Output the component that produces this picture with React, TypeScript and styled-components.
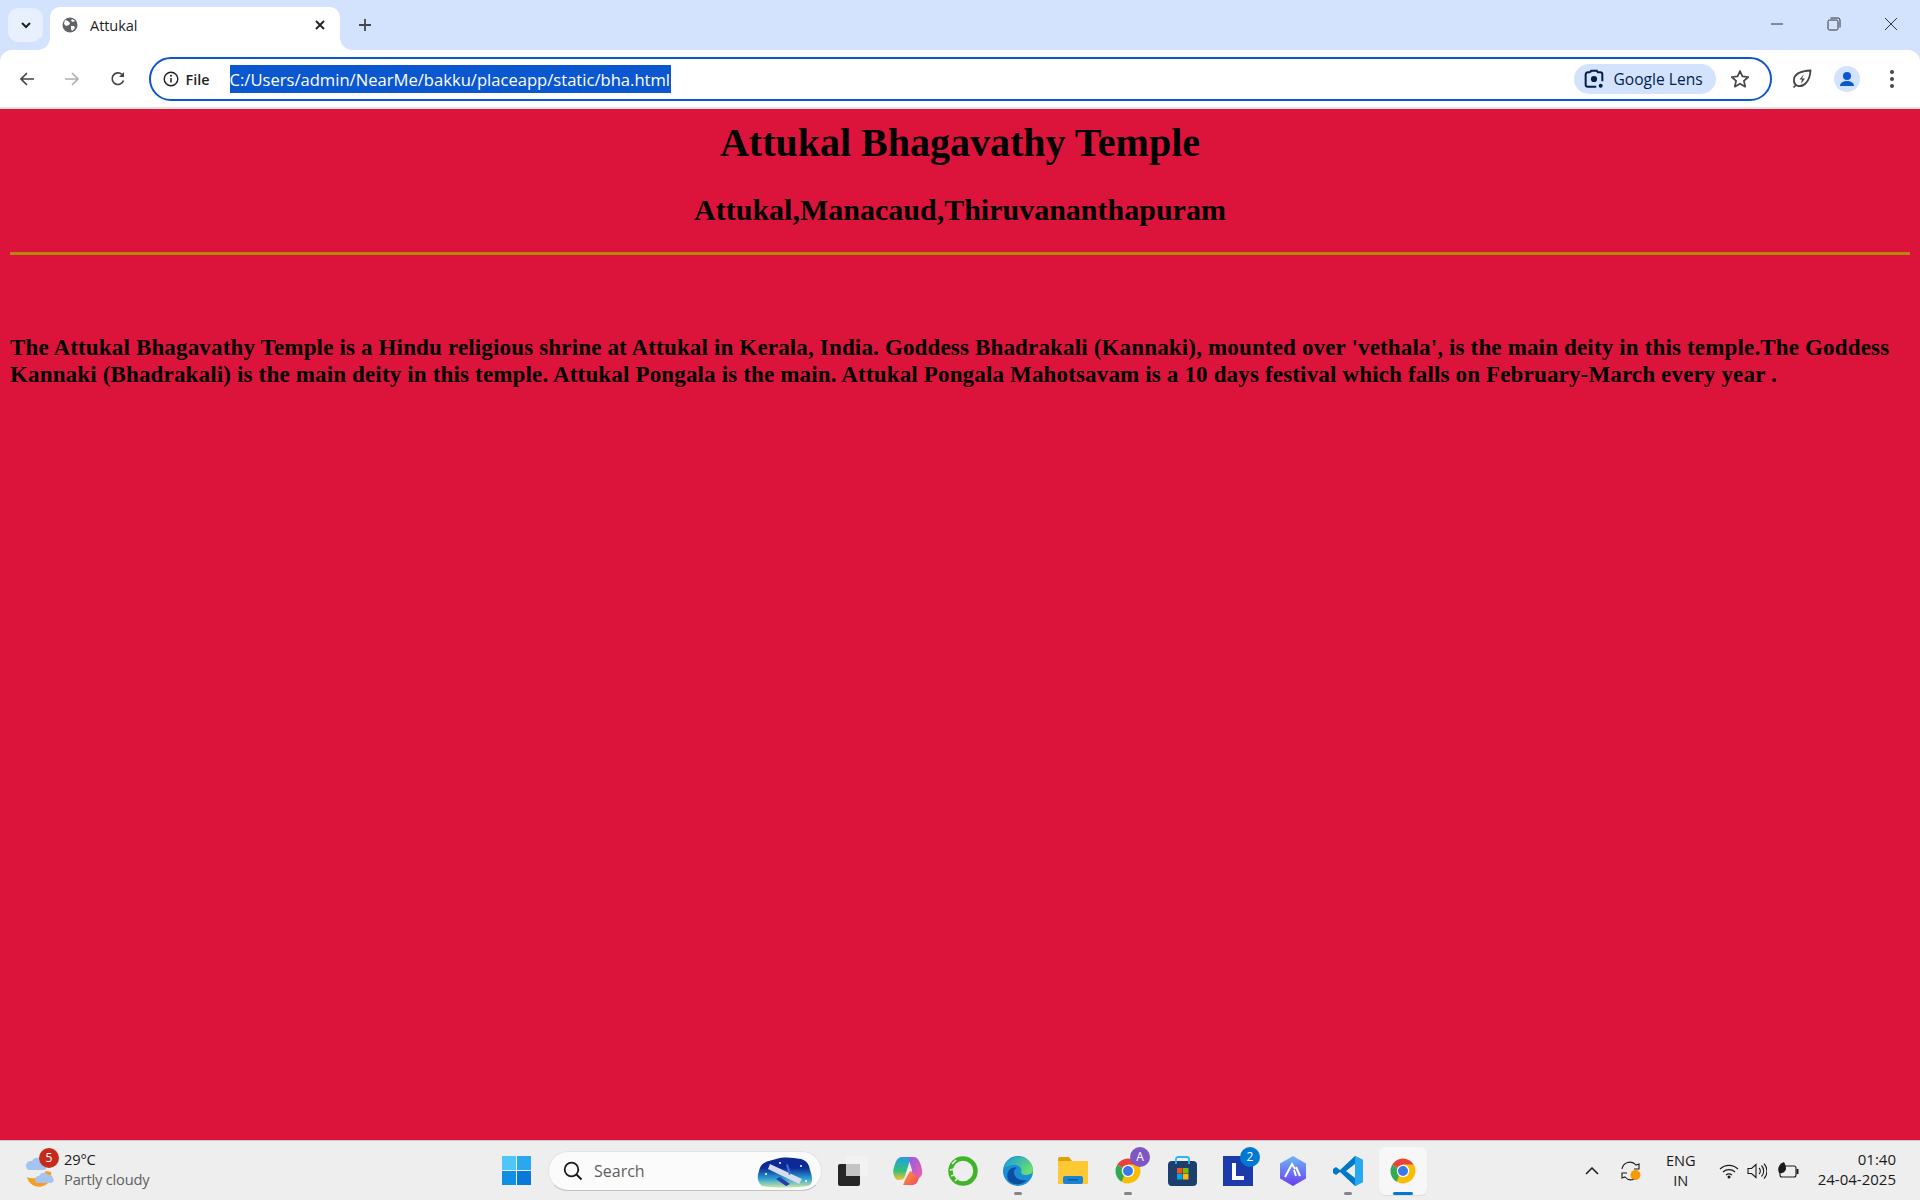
import React from "react";
import styled, { createGlobalStyle } from "styled-components";

const Global = createGlobalStyle`
  html, body { margin: 0; padding: 0; height: 100%; }
  body { overflow: hidden; font-family: "Open Sans", "Liberation Sans", sans-serif; }
  #root { height: 100%; }
  * { box-sizing: border-box; }
`;

const Screen = styled.div`
  width: 1920px; height: 1200px; display: flex; flex-direction: column; background: #d3e3fd;
`;
const TabStrip = styled.div`
  height: 50px; flex: none; display: flex; align-items: flex-end; padding-left: 8px;
`;
const TabSearch = styled.div`
  width: 35px; height: 34px; margin-bottom: 8px; flex: none; border-radius: 10px; background: #e8effd;
  display: flex; align-items: center; justify-content: center;
`;
const Tab = styled.div`
  position: relative; width: 290px; height: 43px; margin-left: 7px; flex: none; background: #fff;
  border-radius: 10px 10px 0 0; display: flex; align-items: center; padding: 0 14px 8px 12px;
  &::before, &::after { content: ""; position: absolute; bottom: 0; width: 12px; height: 12px; background: radial-gradient(circle at var(--c) 0, #d3e3fd 11.5px, #fff 12px); }
  &::before { left: -12px; --c: 0; }
  &::after { right: -12px; --c: 100%; }
`;
const TabTitle = styled.span`
  flex: 1; margin-left: 12px; font-size: 14.6px; color: #1f1f1f; letter-spacing: -0.1px;
`;
const NewTab = styled.div`
  width: 28px; height: 28px; margin: 0 0 11px 11px; flex: none; display: flex; align-items: center; justify-content: center;
`;
const WindowControls = styled.div`
  margin-left: auto; display: flex; align-self: flex-start; padding-top: 10px; padding-right: 1px;
`;
const WindowButton = styled.div`
  width: 57px; height: 28px; display: flex; align-items: center; justify-content: center;
`;
const Toolbar = styled.div`
  height: 59px; flex: none; background: #fff; border-bottom: 2px solid #e3e3e3; border-radius: 12px 12px 0 0;
  display: flex; align-items: flex-start; padding: 7px 0 0 0; position: relative;
`;
const NavButton = styled.div<{ $w: number }>`
  width: ${(p) => p.$w}px; height: 44px; flex: none; display: flex; align-items: center; justify-content: center;
`;
const Omnibox = styled.div`
  width: 1623px; height: 44px; flex: none; margin-left: 3px; border: 2.5px solid #0b57d0; border-radius: 22px;
  display: flex; align-items: center; padding: 0 11.5px;
`;
const SiteInfo = styled.span`
  font-size: 14.4px; font-weight: 600; color: #1f1f1f; margin-left: 7px; width: 44px; flex: none;
`;
const Selected = styled.span`
  background: #0b57d0; color: #fff; height: 28px; line-height: 29px; font-size: 16.6px; white-space: nowrap;
  width: 441px; flex: none; font-family: "Open Sans", sans-serif;
`;
const LensChip = styled.div`
  margin-left: auto; width: 142px; height: 30px; border-radius: 15px; background: #d3e3fd; display: flex; align-items: center;
  padding-left: 10px; gap: 10px; color: #041e49; font-size: 15.6px; font-weight: 500; white-space: nowrap;
`;
const StarWrap = styled.div`
  width: 36px; margin-left: 6px; margin-right: 1px; display: flex; justify-content: center;
`;
const Page = styled.main`
  flex: 1; min-height: 0; background: #dc143c; padding: 0 10px; color: #000; font-family: "Liberation Serif", "Times New Roman", serif;
`;
const Title = styled.h1`
  font-size: 40px; font-weight: 700; text-align: center; margin: 0; padding-top: 11px; line-height: 46px;
`;
const Subtitle = styled.h2`
  font-size: 30px; font-weight: 700; text-align: center; margin: 27px 0 0; line-height: 34px;
`;
const Rule = styled.hr`
  height: 3px; border: 0; margin: 25px 0 0; background: #b8860b;
`;
const Paragraph = styled.h3`
  font-size: 23px; font-weight: 700; margin: 79px 0 0; line-height: 27px; letter-spacing: 0.16px;
`;
const Taskbar = styled.footer`
  height: 60px; flex: none; background: #eeeeee; border-top: 1px solid #c9c9c9; display: grid;
  grid-template-columns: 489px 1fr 400px; align-items: center; position: relative;
`;
const Weather = styled.div`
  display: flex; align-items: center; padding-left: 24px; gap: 5px;
`;
const WeatherIcon = styled.div`
  position: relative; width: 35px; height: 38px; flex: none;
`;
const WeatherBadge = styled.span`
  position: absolute; left: 15px; top: -4px; width: 20px; height: 20px; border-radius: 50%; background: #c42b1c; color: #fff;
  font-size: 12px; display: flex; align-items: center; justify-content: center;
`;
const WeatherText = styled.div`
  display: flex; flex-direction: column; font-size: 14.7px; line-height: 20px; color: #1a1a1a; letter-spacing: -0.2px; margin-top: -4px;
  & > span:last-child { color: #616161; }
`;
const Center = styled.div`
  display: flex; align-items: center; height: 100%;
`;
const TaskItem = styled.div<{ $active?: boolean }>`
  position: relative; width: ${(p) => (p.$active ? 48 : 55)}px; height: 48px; flex: none; display: flex; align-items: center; justify-content: center;
  margin: ${(p) => (p.$active ? "0 3.5px" : "0")};
  border-radius: 6px; background: ${(p) => (p.$active ? "#f7f7f7" : "transparent")};
  box-shadow: ${(p) => (p.$active ? "0 1px 1px rgba(0,0,0,.08)" : "none")};
`;
const RunDot = styled.span<{ $active?: boolean }>`
  position: absolute; bottom: 0; left: 50%; transform: translateX(-50%); height: 3px; border-radius: 2px;
  width: ${(p) => (p.$active ? 20 : 8)}px; background: ${(p) => (p.$active ? "#0078d4" : "#858585")};
`;
const IconBadge = styled.span<{ $bg: string; $right: number }>`
  position: absolute; top: 0; right: ${(p) => p.$right}px; width: 20px; height: 20px; border-radius: 50%; background: ${(p) => p.$bg};
  color: #fff; font-size: 12px; display: flex; align-items: center; justify-content: center;
`;
const SearchBox = styled.div`
  width: 274px; height: 40px; margin: 0 3px 0 4px; border-radius: 20px; background: #fbfbfb; border: 1px solid #e3e3e3; border-bottom-color: #c4c4c4;
  display: flex; align-items: center; padding-left: 14px; gap: 11px; position: relative; font-size: 16px; color: #5f5f5f; flex: none;
`;
const SearchArt = styled.div`
  position: absolute; right: 7px; top: 4px;
`;
const Tray = styled.div`
  display: flex; align-items: center; justify-content: flex-end; height: 100%; padding-right: 24px; color: #1a1a1a;
`;
const TrayIcon = styled.div<{ $w: number; $ml?: number }>`
  width: ${(p) => p.$w}px; margin-left: ${(p) => p.$ml ?? 0}px; display: flex; justify-content: center; flex: none;
`;
const Lang = styled.div`
  width: 44px; margin: -2px 14px 0 16px; text-align: center; font-size: 14.6px; line-height: 20px; letter-spacing: -0.1px;
`;
const Clock = styled.div`
  margin: -3px 0 0 18px; text-align: right; font-size: 15px; line-height: 20px; letter-spacing: 0;
`;

const Globe = () => (
  <svg width="16" height="16" viewBox="0 0 16 16">
    <circle cx="8" cy="8" r="7.5" fill="#5f6368" />
    <path d="M3 3l3 1 2 2-1 2-3 1-2-2zM9 9l3 0 1 2-3 3-1-2zM10 2l3 2-2 1-2-1z" fill="#fff" />
  </svg>
);
const ChromeLogo = ({ size = 30 }: { size?: number }) => (
  <svg width={size} height={size} viewBox="0 0 48 48">
    <path d="M24 24L6.700 14A20 20 0 0 1 41.300 14H24z" fill="#ea4335" />
    <path d="M24 24l-10 17.300A20 20 0 0 1 6.700 14z" fill="#34a853" />
    <path d="M24 14h17.300A20 20 0 0 1 14 41.300z" fill="#fbbc04" />
    <circle cx="24" cy="24" r="10" fill="#fff" />
    <circle cx="24" cy="24" r="8" fill="#3b78e7" />
  </svg>
);

export default function App() {
  return (
    <Screen>
      <Global />
      <TabStrip>
        <TabSearch>
          <svg width="12" height="12" viewBox="0 0 12 12"><path d="M2 4l4 4 4-4" fill="none" stroke="#1f1f1f" strokeWidth="2" /></svg>
        </TabSearch>
        <Tab>
          <Globe />
          <TabTitle>Attukal</TabTitle>
          <svg width="12" height="12" viewBox="0 0 12 12"><path d="M2 2l8 8M10 2l-8 8" stroke="#1f1f1f" strokeWidth="1.8" /></svg>
        </Tab>
        <NewTab>
          <svg width="14" height="14" viewBox="0 0 14 14"><path d="M7 1v12M1 7h12" stroke="#444746" strokeWidth="1.8" /></svg>
        </NewTab>
        <WindowControls>
          <WindowButton>
            <svg width="14" height="14" viewBox="0 0 14 14"><path d="M1 7h12" stroke="#333" strokeWidth="1" /></svg>
          </WindowButton>
          <WindowButton>
            <svg width="14" height="14" viewBox="0 0 14 14"><rect x="1" y="3" width="10" height="10" rx="1.5" fill="none" stroke="#333" /><path d="M3.500 1h7.500a2 2 0 0 1 2 2v7.500" fill="none" stroke="#333" /></svg>
          </WindowButton>
          <WindowButton>
            <svg width="14" height="14" viewBox="0 0 14 14"><path d="M1 1l12 12M13 1L1 13" stroke="#333" strokeWidth="1" /></svg>
          </WindowButton>
        </WindowControls>
      </TabStrip>
      <Toolbar>
        <NavButton $w={54}>
          <svg width="16" height="16" viewBox="0 0 16 16"><path d="M15 8H2M8 2L2 8l6 6" fill="none" stroke="#444746" strokeWidth="1.7" /></svg>
        </NavButton>
        <NavButton $w={36}>
          <svg width="16" height="16" viewBox="0 0 16 16"><path d="M1 8h13M8 2l6 6-6 6" fill="none" stroke="#aeb0b2" strokeWidth="1.7" /></svg>
        </NavButton>
        <NavButton $w={56}>
          <svg width="16" height="16" viewBox="0 0 16 16"><path d="M13.500 9.500A5.800 5.800 0 1 1 12 3.500" fill="none" stroke="#444746" strokeWidth="1.700" /><path d="M14 1v5H9z" fill="#444746" /></svg>
        </NavButton>
        <Omnibox>
          <svg width="16" height="16" viewBox="0 0 16 16"><circle cx="8" cy="8" r="6.800" fill="none" stroke="#1f1f1f" strokeWidth="1.400" /><path d="M8 7v4.500" stroke="#1f1f1f" strokeWidth="1.500" /><circle cx="8" cy="4.800" r="1" fill="#1f1f1f" /></svg>
          <SiteInfo>File</SiteInfo>
          <Selected>C:/Users/admin/NearMe/bakku/placeapp/static/bha.html</Selected>
          <LensChip>
            <svg width="20" height="20" viewBox="0 0 18 18"><path d="M5.500 3H3.500A2 2 0 0 0 1.500 5v9a2 2 0 0 0 2 2H11M5.500 3l1-1.500h5L12.500 3h2a2 2 0 0 1 2 2v6" fill="none" stroke="#041e49" strokeWidth="1.800" /><circle cx="9" cy="9" r="2.800" fill="#041e49" /><circle cx="15" cy="15" r="1.800" fill="#041e49" /></svg>
            Google Lens
          </LensChip>
          <StarWrap>
            <svg width="20" height="20" viewBox="0 0 20 20"><path d="M10 2l2.400 5.400 5.900.6-4.400 3.900 1.300 5.800L10 14.700 4.800 17.700l1.300-5.800L1.700 8l5.900-.6z" fill="none" stroke="#444746" strokeWidth="1.700" strokeLinejoin="round" /></svg>
          </StarWrap>
        </Omnibox>
        <NavButton $w={60}>
          <svg width="20" height="20" viewBox="0 0 20 20"><path d="M18.500 1.500C9 2 3 4 2 10c-.4 3 1 6 4 7 6 1 12-5 12.500-15.500z" fill="none" stroke="#444746" strokeWidth="1.800" /><path d="M12 5L7.500 10.500H10L9 15l4-5.500h-3z" fill="#444746" /><path d="M1.500 18.500L4 16" stroke="#444746" strokeWidth="1.700" /></svg>
        </NavButton>
        <NavButton $w={30}>
          <svg width="26" height="26" viewBox="0 0 26 26"><circle cx="13" cy="13" r="13" fill="#d3e3fd" /><circle cx="13" cy="10" r="4" fill="#0b57d0" /><path d="M6 20c0-3.500 3.500-5 7-5s7 1.500 7 5z" fill="#0b57d0" /></svg>
        </NavButton>
        <NavButton $w={60}>
          <svg width="6" height="20" viewBox="0 0 6 20"><circle cx="3" cy="3" r="2" fill="#444746" /><circle cx="3" cy="10" r="2" fill="#444746" /><circle cx="3" cy="17" r="2" fill="#444746" /></svg>
        </NavButton>
      </Toolbar>
      <Page>
        <Title>Attukal Bhagavathy Temple</Title>
        <Subtitle>Attukal,Manacaud,Thiruvananthapuram</Subtitle>
        <Rule />
        <Paragraph>The Attukal Bhagavathy Temple is a Hindu religious shrine at Attukal in Kerala, India. Goddess Bhadrakali (Kannaki), mounted over 'vethala', is the main deity in this temple.The Goddess Kannaki (Bhadrakali) is the main deity in this temple. Attukal Pongala is the main. Attukal Pongala Mahotsavam is a 10 days festival which falls on February-March every year .</Paragraph>
      </Page>
      <Taskbar>
        <Weather>
          <WeatherIcon>
            <svg width="35" height="38" viewBox="0 0 35 38">
              <path d="M27 20a12 12 0 0 1-24 5c6 3 14 1 19-6z" fill="#f59e20" />
              <path d="M2 14a5 5 0 0 1 6-5 6 6 0 0 1 11 1 4 4 0 0 1 0 8H6a4 4 0 0 1-4-4z" fill="#a5c3ef" />
              <path d="M11 28a4 4 0 0 1 4-4 5 5 0 0 1 9-1 4 4 0 0 1 5 3 3 3 0 0 1-2 5H14a3 3 0 0 1-3-3z" fill="#a5c3ef" />
            </svg>
            <WeatherBadge>5</WeatherBadge>
          </WeatherIcon>
          <WeatherText><span>29°C</span><span>Partly cloudy</span></WeatherText>
        </Weather>
        <Center>
          <TaskItem>
            <svg width="29" height="29" viewBox="0 0 29 29"><rect width="14" height="14" fill="#4fc6f8" /><rect x="15" width="14" height="14" fill="#2aa7ee" /><rect y="15" width="14" height="14" fill="#1090e2" /><rect x="15" y="15" width="14" height="14" fill="#0a78d6" /></svg>
          </TaskItem>
          <SearchBox>
            <svg width="20" height="20" viewBox="0 0 20 20"><circle cx="8.500" cy="8.500" r="6.800" fill="none" stroke="#1a1a1a" strokeWidth="1.800" /><path d="M13.500 13.500L18.500 18.500" stroke="#1a1a1a" strokeWidth="2" /></svg>
            Search
            <SearchArt>
              <svg width="58" height="32" viewBox="0 0 58 32">
                <defs><linearGradient id="sky" x1="0" y1="0" x2="0" y2="1"><stop offset="0.35" stopColor="#0c2a96" /><stop offset="0.7" stopColor="#2b9fd0" /><stop offset="1" stopColor="#c9e8a8" /></linearGradient></defs>
                <path d="M3 15C5 5 14 5 20 3 30 0 37 2 45 3c6 2 8 5 9 11 3 8 3 14-2 16-15 2-35 2-46 0C1 26 1 20 3 15z" fill="url(#sky)" />
                <path d="M14 8l32 15-3 5-31-15z" fill="#d7dbee" />
                <path d="M24 21l10 7-4 2-10-7z" fill="#2a3aa8" />
                <path d="M32 8l3 10-2 1-3-10z" fill="#3a6fd8" />
                <circle cx="10" cy="18" r="1" fill="#fff" /><circle cx="24" cy="7" r="1" fill="#fff" /><circle cx="50" cy="25" r="1" fill="#fff" /><circle cx="45" cy="10" r="1" fill="#fff" />
              </svg>
            </SearchArt>
          </SearchBox>
          <TaskItem>
            <svg width="30" height="30" viewBox="0 0 30 30"><rect x="0" y="8" width="22" height="22" rx="2" fill="#262626" /><rect x="8" y="0" width="22" height="20" rx="2" fill="#f2f2f2" /><rect x="8" y="8" width="14" height="12" fill="#c4c4c4" /></svg>
          </TaskItem>
          <TaskItem>
            <svg width="30" height="30" viewBox="0 0 30 30">
              <defs>
                <linearGradient id="copA" x1="0" y1="0" x2="0" y2="1"><stop offset="0" stopColor="#1fa0e8" /><stop offset="0.6" stopColor="#35c07a" /><stop offset="1" stopColor="#f2c230" /></linearGradient>
                <linearGradient id="copB" x1="0" y1="0" x2="1" y2="1"><stop offset="0" stopColor="#8a5ee8" /><stop offset="1" stopColor="#f060a8" /></linearGradient>
                <linearGradient id="copC" x1="0" y1="0" x2="1" y2="1"><stop offset="0" stopColor="#f8a030" /><stop offset="1" stopColor="#f04860" /></linearGradient>
              </defs>
              <path d="M8 1h10l-6 19c-1 3-3 4-6 4H4C1 22-1 16 1 11 3 5 4 2 8 1z" fill="url(#copA)" />
              <path d="M15 1h6c4 0 7 6 8 13 1 4-1 7-3 8l-9-1 2-7z" fill="url(#copB)" />
              <path d="M10 29h10c4-1 5-4 6-7l-9-7-5 9c-1 2-1 4-2 5z" fill="url(#copC)" />
            </svg>
          </TaskItem>
          <TaskItem>
            <svg width="30" height="30" viewBox="0 0 30 30"><circle cx="15" cy="15" r="12.500" fill="none" stroke="#3fb427" strokeWidth="4.500" /><path d="M4 8l4-4M2 14l4-1M3 20l3-1M7 25l2-2" stroke="#eee" strokeWidth="1.500" /></svg>
          </TaskItem>
          <TaskItem>
            <svg width="30" height="30" viewBox="0 0 30 30">
              <defs><linearGradient id="edge" x1="0" y1="0" x2="1" y2="0.6"><stop offset="0.1" stopColor="#1ca0d8" /><stop offset="1" stopColor="#6be06a" /></linearGradient></defs>
              <circle cx="15" cy="15" r="15" fill="#1a8fd8" />
              <path d="M1 11C5 0 20-3 27 6c4 5 4 11 0 12-4 2-9 1-9-2 2-4-3-8-8-7C6 9 3 12 1 11z" fill="url(#edge)" />
              <path d="M11 16c0 6 6 9 13 8-4 5-13 6-18 1-3-4-2-11 3-13 2-1 4-1 5 0-2 1-3 2-3 4z" fill="#0c4f9e" />
            </svg>
            <RunDot />
          </TaskItem>
          <TaskItem>
            <svg width="30" height="27" viewBox="0 0 30 27"><path d="M0 2a2 2 0 0 1 2-2h9l3 4h16v3H0z" fill="#dba105" /><rect y="4" width="30" height="23" fill="#fcc935" /><rect x="5" y="19" width="20" height="8" rx="2" fill="#1b83d4" /><rect x="10" y="22" width="10" height="1.500" fill="#0c5a9a" /></svg>
          </TaskItem>
          <TaskItem>
            <ChromeLogo />
            <IconBadge $bg="#7e57c2" $right={5}>A</IconBadge>
            <RunDot />
          </TaskItem>
          <TaskItem>
            <svg width="30" height="30" viewBox="0 0 30 30"><rect y="5" width="29" height="25" rx="4" fill="#1d3f6e" /><path d="M8 8V3a2 2 0 0 1 2-2h9a2 2 0 0 1 2 2v5" fill="none" stroke="#29b6f6" strokeWidth="1.800" /><rect x="9" y="12" width="5.500" height="5.500" fill="#f05423" /><rect x="15" y="12" width="5.500" height="5.500" fill="#7fba00" /><rect x="9" y="18" width="5.500" height="5.500" fill="#00a4ef" /><rect x="15" y="18" width="5.500" height="5.500" fill="#ffb900" /></svg>
          </TaskItem>
          <TaskItem>
            <svg width="30" height="30" viewBox="0 0 30 30"><rect width="30" height="30" fill="#1c3aa9" /><path d="M11 7v15h10" fill="none" stroke="#fff" strokeWidth="4" /></svg>
            <IconBadge $bg="#0078d4" $right={5}>2</IconBadge>
          </TaskItem>
          <TaskItem>
            <svg width="30" height="30" viewBox="0 0 30 30"><defs><linearGradient id="arc" x1="0" y1="0" x2="0" y2="1"><stop offset="0" stopColor="#6cb7f5" /><stop offset="1" stopColor="#6a3df0" /></linearGradient></defs><path d="M15 0l13 7.500v15L15 30 2 22.500v-15z" fill="url(#arc)" /><path d="M7 21L14 8l3 5M18 20l-2-6M22 20l-4-9" fill="none" stroke="#fff" strokeWidth="2" /></svg>
          </TaskItem>
          <TaskItem>
            <svg width="30" height="30" viewBox="0 0 30 30"><path d="M22 0l8 4v22l-8 4L7 16l-4 3-3-2v-4l3-2 4 3z" fill="#0078c8" /><path d="M22 0l8 4v22l-8 4z" fill="#27a9f0" /><path d="M22 8v14l-9-7z" fill="#eee" /></svg>
            <RunDot />
          </TaskItem>
          <TaskItem $active>
            <ChromeLogo />
            <RunDot $active />
          </TaskItem>
        </Center>
        <Tray>
          <TrayIcon $w={20}>
            <svg width="14" height="8" viewBox="0 0 14 8"><path d="M1 7l6-6 6 6" fill="none" stroke="#1a1a1a" strokeWidth="1.500" /></svg>
          </TrayIcon>
          <TrayIcon $w={24} $ml={17}>
            <svg width="22" height="22" viewBox="0 0 22 22"><path d="M2 9a8 8 0 0 1 14-4l3-1v5h-5M19 13a8 8 0 0 1-14 4l-3 1v-5h5" fill="none" stroke="#1a1a1a" strokeWidth="1.100" /><circle cx="15.500" cy="15" r="5" fill="#f59b00" /></svg>
          </TrayIcon>
          <Lang>ENG<br />IN</Lang>
          <TrayIcon $w={24}>
            <svg width="20" height="16" viewBox="0 0 20 16"><path d="M1 6a13 13 0 0 1 18 0M4 9a9 9 0 0 1 12 0M7 12a5 5 0 0 1 6 0" fill="none" stroke="#1a1a1a" strokeWidth="1.200" /><circle cx="10" cy="14" r="1.500" fill="#1a1a1a" /></svg>
          </TrayIcon>
          <TrayIcon $w={24} $ml={4}>
            <svg width="20" height="18" viewBox="0 0 20 18"><path d="M1 6.500h3.500L9 2.500v13l-4.500-4H1z" fill="none" stroke="#1a1a1a" strokeWidth="1.100" /><path d="M12 6a4 4 0 0 1 0 6M14.500 3.500a8 8 0 0 1 0 11M17 1.500a11 11 0 0 1 0 15" fill="none" stroke="#1a1a1a" strokeWidth="1.100" /></svg>
          </TrayIcon>
          <TrayIcon $w={24} $ml={7}>
            <svg width="22" height="18" viewBox="0 0 22 18"><rect x="3" y="4" width="16" height="11" rx="2" fill="none" stroke="#1a1a1a" strokeWidth="1.100" /><rect x="19.500" y="7" width="2" height="5" fill="#1a1a1a" /><path d="M7 0c-5 2-7 6-5 11 2 1 6 0 7-4 0-3-1-5-2-7z" fill="#1a1a1a" /></svg>
          </TrayIcon>
          <Clock>01:40<br />24-04-2025</Clock>
        </Tray>
      </Taskbar>
    </Screen>
  );
}
